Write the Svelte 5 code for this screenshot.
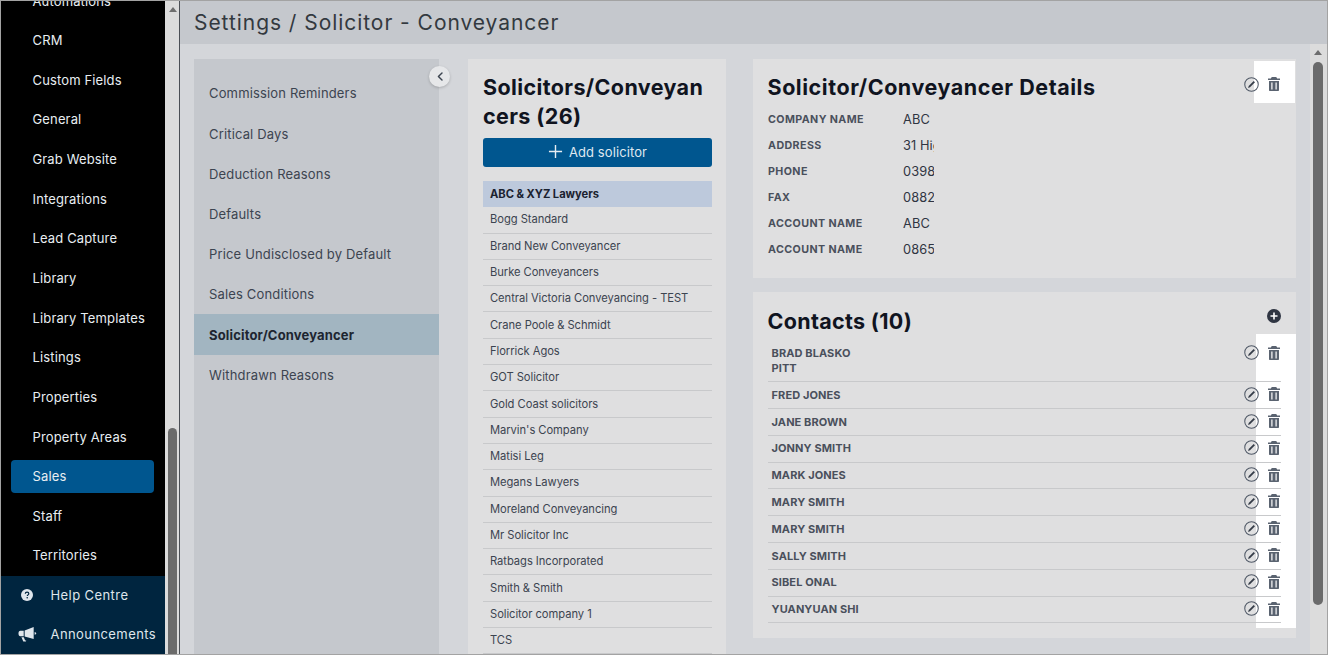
<script>
  const nav = ['Automations','CRM','Custom Fields','General','Grab Website','Integrations','Lead Capture','Library','Library Templates','Listings','Properties','Property Areas','Sales','Staff','Territories'];
  const settings = ['Commission Reminders','Critical Days','Deduction Reasons','Defaults','Price Undisclosed by Default','Sales Conditions','Solicitor/Conveyancer','Withdrawn Reasons'];
  const solicitors = ['ABC & XYZ Lawyers','Bogg Standard','Brand New Conveyancer','Burke Conveyancers','Central Victoria Conveyancing - TEST','Crane Poole & Schmidt','Florrick Agos','GOT Solicitor','Gold Coast solicitors',"Marvin's Company",'Matisi Leg','Megans Lawyers','Moreland Conveyancing','Mr Solicitor Inc','Ratbags Incorporated','Smith & Smith','Solicitor company 1','TCS'];
  const details = [['Company name','ABC'],['Address','31 High Street'],['Phone','0398765432'],['Fax','0882345678'],['Account name','ABC'],['Account name','0865432100']];
  const contacts = ['Brad Blasko Pitt','Fred Jones','Jane Brown','Jonny Smith','Mark Jones','Mary Smith','Mary Smith','Sally Smith','Sibel Onal','Yuanyuan Shi'];
</script>

{#snippet actions()}
  <div class="actions">
    <svg class="edit" viewBox="0 0 16 16" width="15" height="15" aria-hidden="true">
      <circle cx="8" cy="8" r="7.2" fill="none" stroke="#4f5866" stroke-width="1.1"/>
      <path d="M4.400 11.600L5 9.600 10.300 4.300 11.700 5.700 6.400 11z" fill="#353c48"/>
    </svg>
    <svg class="trash" viewBox="0 0 12 14" width="12" height="14" aria-hidden="true">
      <path fill="#5a6370" fill-rule="evenodd" d="M4.200 0h3.600c.4 0 .7.2.9.6l.4.8H12v1.500H0V1.400h2.900l.4-.8c.2-.4.5-.6.9-.6zM1 4h10v9c0 .6-.4 1-1 1H2c-.6 0-1-.4-1-1zM3.300 5.500v7h1.200v-7zm4.200 0v7h1.200v-7z"/>
    </svg>
  </div>
{/snippet}

<div class="app">
  <aside class="sidebar">
    <div class="menu">
      <nav class="nav">
        {#each nav as item}
          <div class="nav-item" class:current={item === 'Sales'}>{item}</div>
        {/each}
      </nav>
      <div class="foot">
        <div class="foot-item">
          <span class="foot-icon">
            <svg viewBox="0 0 12 12" width="12" height="12" aria-hidden="true">
              <circle cx="6" cy="6" r="6" fill="#dfe6ec"/>
              <path d="M4.300 4.700c0-1 .8-1.600 1.800-1.600s1.700.6 1.700 1.500c0 1.300-1.500 1.300-1.500 2.500" fill="none" stroke="#00253f" stroke-width="1.200"/>
              <circle cx="6.200" cy="8.800" r=".8" fill="#00253f"/>
            </svg>
          </span>
          Help Centre
        </div>
        <div class="foot-item">
          <span class="foot-icon">
            <svg viewBox="0 0 20 16" width="19" height="16" aria-hidden="true">
              <path fill="#dfe6ec" d="M16.500.5v12.800L7 10.600V4.400zM6 4.600v5.800H2.500C1.200 10.400.5 9 .5 7.500s.7-2.900 2-2.900zM17.500 6c1 .2 1.700.8 1.700 1.400s-.7 1.200-1.700 1.400zM3.600 11.300h2.500l1.300 3.300 1.400.4-.6 1H5.600z"/>
            </svg>
          </span>
          Announcements
        </div>
      </div>
    </div>
    <div class="side-scroll">
      <span class="arrow"></span>
      <span class="side-thumb"></span>
    </div>
  </aside>

  <main class="main">
    <header class="header">Settings / Solicitor - Conveyancer</header>
    <div class="body">
      <div class="columns">
        <section class="settings">
          <button class="collapse" aria-label="Collapse">
            <svg viewBox="0 0 10 12" width="8" height="11" aria-hidden="true"><path d="M7.500 1.500L3 6l4.500 4.500" fill="none" stroke="#3c4450" stroke-width="1.800" stroke-linecap="round" stroke-linejoin="round"/></svg>
          </button>
          {#each settings as s}
            <div class="setting" class:on={s === 'Solicitor/Conveyancer'}>{s}</div>
          {/each}
        </section>

        <section class="list">
          <h2>Solicitors/Conveyan<br/>cers (26)</h2>
          <div class="add">
            <svg viewBox="0 0 16 16" width="15" height="15" aria-hidden="true"><path d="M8 1v14M1 8h14" stroke="#e6edf3" stroke-width="1.500"/></svg>
            Add solicitor
          </div>
          <div class="rows">
            {#each solicitors as s, i}
              <div class="row" class:sel={i === 0}>{s}</div>
            {/each}
          </div>
        </section>

        <div class="right">
          <section class="card details">
            <div class="white top"></div>
            <div class="card-head">
              <h2>Solicitor/Conveyancer Details</h2>
              {@render actions()}
            </div>
            <dl>
              {#each details as d}
                <div class="pair"><dt>{d[0]}</dt><dd>{d[1]}</dd></div>
              {/each}
            </dl>
          </section>

          <section class="card contacts">
            <div class="white side"></div>
            <div class="card-head contact-head">
              <h2>Contacts (10)</h2>
              <svg class="plus" viewBox="0 0 14 14" width="14" height="14" aria-hidden="true">
                <circle cx="7" cy="7" r="7" fill="#2f3542"/>
                <path d="M7 3.500v7M3.500 7h7" stroke="#fff" stroke-width="1.600"/>
              </svg>
            </div>
            {#each contacts as c}
              <div class="contact">
                <span class="name">{c}</span>
                {@render actions()}
              </div>
            {/each}
          </section>
        </div>
      </div>
      <div class="main-scroll">
        <span class="arrow"></span>
        <span class="main-thumb"></span>
      </div>
    </div>
  </main>
</div>

<style>
  :global(body) { margin: 0; }
  .app {
    box-sizing: border-box;
    width: 1328px;
    height: 655px;
    display: flex;
    overflow: hidden;
    border: 1px solid #a3a3a3;
    font-family: Inter, "Liberation Sans", sans-serif;
    color: #2f3542;
    background: #d4d6da;
  }
  .sidebar { width: 178px; flex: none; display: flex; border-right: 1px solid #4b4f55; }
  .menu { width: 164px; flex: none; display: flex; flex-direction: column; background: #000; }
  .nav { flex: 1; min-height: 0; overflow: hidden; padding: 0 11px 0 10px; }
  .nav-item {
    box-sizing: border-box;
    height: 33px;
    margin-bottom: 6.650px;
    padding-left: 21.500px;
    border-radius: 4px;
    display: flex;
    align-items: center;
    color: #e8eef2;
    font-size: 13px;
    letter-spacing: .14px;
  }
  .nav-item:first-child { margin-top: -17px; }
  .nav-item.current { background: #00568f; }
  .foot { height: 78px; flex: none; background: #00253f; }
  .foot-item {
    height: 39px;
    margin-top: -1px;
    margin-bottom: 1px;
    display: flex;
    align-items: center;
    color: #dfe6ec;
    font-size: 13px;
    letter-spacing: .42px;
  }
  .foot-icon { width: 49.500px; flex: none; display: flex; justify-content: center; padding-left: 3px; box-sizing: border-box; }
  .side-scroll {
    width: 14px;
    flex: none;
    background: #dcdcdc;
    display: flex;
    flex-direction: column;
    align-items: center;
  }
  .arrow {
    width: 0;
    height: 0;
    border-left: 4px solid transparent;
    border-right: 4px solid transparent;
    border-bottom: 5px solid #6e6e6e;
    margin-top: 6px;
  }
  .side-scroll .arrow { margin-left: 1px; }
  .side-thumb { width: 9px; flex: none; height: 240px; background: #6b6b6b; border-radius: 5px 5px 0 0; margin-top: 416px; margin-left: 1px; }
  .main { flex: 1; min-width: 0; display: flex; flex-direction: column; }
  .header {
    height: 43px;
    flex: none;
    box-sizing: border-box;
    padding-left: 14px;
    display: flex;
    align-items: center;
    background: #c5c8cd;
    font-size: 21px;
    letter-spacing: .95px;
    color: #33393f;
  }
  .body { flex: 1; min-height: 0; display: flex; }
  .columns { flex: 1; min-width: 0; display: flex; padding: 15px 0 0 14px; overflow: hidden; }
  .settings {
    width: 245px;
    flex: none;
    background: #c5c8cd;
    position: relative;
    padding-top: 14.300px;
    box-sizing: border-box;
  }
  .collapse {
    position: absolute;
    right: -11px;
    top: 7px;
    width: 21px;
    height: 21px;
    border: 0;
    padding: 0;
    border-radius: 50%;
    background: #e6e7e9;
    box-shadow: 0 1px 3px rgba(0,0,0,.2);
    display: flex;
    align-items: center;
    justify-content: center;
  }
  .setting {
    height: 40.200px;
    display: flex;
    align-items: center;
    padding-left: 15px;
    font-size: 13px;
    letter-spacing: .16px;
    color: #3c4450;
  }
  .setting.on { background: #a2b5c1; font-weight: 700; color: #1d2530; }
  .list {
    width: 258px;
    flex: none;
    margin-left: 29px;
    background: #dfdfe0;
    padding: 14px 14px 0 15px;
    box-sizing: border-box;
  }
  h2 { margin: 0; color: #10141f; font-weight: 700; }
  .list h2 { font-size: 21.500px; line-height: 29px; letter-spacing: .38px; white-space: nowrap; }
  .add {
    box-sizing: border-box;
    height: 29px;
    margin-top: 7px;
    padding-bottom: 2px;
    border-radius: 3px;
    background: #00568f;
    color: #dfe8ef;
    display: flex;
    align-items: center;
    justify-content: center;
    gap: 6px;
    font-size: 13px;
    letter-spacing: .1px;
  }
  .rows { margin-top: 14px; }
  .row {
    box-sizing: border-box;
    height: 26.300px;
    display: flex;
    align-items: center;
    padding: 0 0 1px 7px;
    font-size: 11.200px;
    letter-spacing: -.05px;
    color: #3c4450;
    border-bottom: 1px solid #c8c9cb;
  }
  .row.sel { background: #bdc9dc; font-weight: 700; color: #1b2230; border-bottom: 0; }
  .right { flex: 1; min-width: 0; margin-left: 27px; display: flex; flex-direction: column; gap: 14px; padding-right: 14px; }
  .card { background: #dfdfe0; position: relative; box-sizing: border-box; padding: 0 15px; }
  .details { height: 219px; flex: none; }
  .contacts { height: 346px; flex: none; }
  .card > :not(.white) { position: relative; }
  .white { position: absolute; background: #fff; }
  .white.top { right: 1px; top: 2px; width: 41px; height: 42px; }
  .white.side { right: 0; top: 42px; width: 40px; height: 294px; }
  .card-head { display: flex; justify-content: space-between; align-items: center; padding-top: 14px; height: 29px; }
  .card-head h2 { font-size: 21.500px; letter-spacing: .55px; }
  .details h2 { margin: -1px 0 0 -.5px; }
  .details .actions { margin-top: -7px; }
  .actions { display: flex; align-items: center; gap: 9px; padding-right: 1.500px; flex: none; }
  .edit, .trash { display: block; flex: none; }
  dl { margin: 5px 0 0; }
  .pair { display: flex; height: 25.900px; align-items: center; }
  dt { width: 135px; flex: none; font-size: 10.700px; font-weight: 700; text-transform: uppercase; color: #4a505c; letter-spacing: .4px; }
  dd { margin: 0; width: 31px; overflow: hidden; white-space: nowrap; font-size: 12.800px; color: #2f3542; letter-spacing: .1px; }
  .contact-head { padding-top: 14px; height: 29px; margin-bottom: 5.500px; }
  .contact-head h2 { letter-spacing: .32px; margin-left: -.5px; }
  .contact-head .plus { margin-top: -9px; }
  .contact {
    box-sizing: border-box;
    display: flex;
    justify-content: space-between;
    align-items: flex-start;
    padding: 5.500px 0 5.300px 3.500px;
    border-bottom: 1px solid #c8c9cb;
  }
  .name { width: 100px; font-size: 11px; font-weight: 700; text-transform: uppercase; color: #4a505c; line-height: 15px; letter-spacing: .1px; }
  .contact .actions { margin-top: -1px; }
  .main-scroll {
    width: 17px;
    flex: none;
    box-sizing: border-box;
    padding-right: 2px;
    background: #dcdcdc;
    display: flex;
    flex-direction: column;
    align-items: center;
  }
  .main-thumb { width: 10px; height: 543px; background: #6b6b6b; border-radius: 5px; margin-top: 7px; }
</style>
